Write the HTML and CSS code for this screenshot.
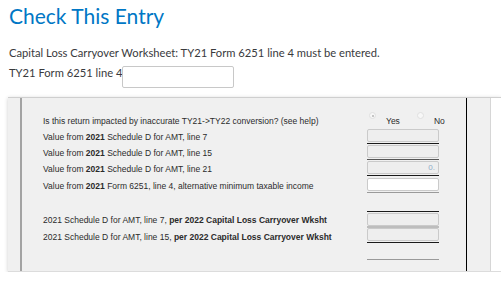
FILE: index.html
```html
<!DOCTYPE html>
<html lang="en">
<head>
    <meta charset="UTF-8">
    <meta name="viewport" content="width=device-width, initial-scale=1.0">
    <title>Check This Entry</title>
    <link rel="stylesheet" href="styles.css">
</head>
<body>
    <h1 class="title">Check This Entry</h1>
    <p class="message">Capital Loss Carryover Worksheet: TY21 Form 6251 line 4 must be entered.</p>

    <div class="entry">
        <label for="line4">TY21 Form 6251 line 4</label>
        <input type="text" id="line4" name="line4">
    </div>

    <div class="panel">
        <div class="gutter"></div>
        <div class="form">
            <div class="row row-radio">
                <div class="label">Is this return impacted by inaccurate TY21-&gt;TY22 conversion? (see help)</div>
                <div class="radios">
                    <span class="radio checked"></span>
                    <span class="radio-text">Yes</span>
                    <span class="radio radio-no"></span>
                    <span class="radio-text">No</span>
                </div>
            </div>

            <div class="row">
                <div class="label">Value from <b>2021</b> Schedule D for AMT, line 7</div>
                <div class="field">
                    <div class="box"></div>
                    <div class="rule"></div>
                </div>
            </div>

            <div class="row">
                <div class="label">Value from <b>2021</b> Schedule D for AMT, line 15</div>
                <div class="field">
                    <div class="box"></div>
                    <div class="rule mid"></div>
                </div>
            </div>

            <div class="row">
                <div class="label">Value from <b>2021</b> Schedule D for AMT, line 21</div>
                <div class="field">
                    <div class="box"><span class="value">0.</span></div>
                    <div class="rule"></div>
                </div>
            </div>

            <div class="row row-shift">
                <div class="label">Value from <b>2021</b> Form 6251, line 4, alternative minimum taxable income</div>
                <div class="field">
                    <div class="box active"></div>
                    <div class="rule gray"></div>
                </div>
            </div>

            <div class="row row-wksht row-gap">
                <div class="label">2021 Schedule D for AMT, line 7, <b>per 2022 Capital Loss Carryover Wksht</b></div>
                <div class="field">
                    <div class="rule top"></div>
                    <div class="box"></div>
                </div>
            </div>

            <div class="row row-wksht row-last">
                <div class="label">2021 Schedule D for AMT, line 15, <b>per 2022 Capital Loss Carryover Wksht</b></div>
                <div class="field">
                    <div class="rule thick"></div>
                    <div class="box"></div>
                    <div class="rule"></div>
                </div>
            </div>

            <div class="total">
                <div class="rule gray"></div>
            </div>
        </div>
        <div class="side"></div>
        <div class="rest"></div>
    </div>
</body>
</html>
```

FILE: styles.css
```css
body {
    margin: 0;
    padding: 0 8px;
    overflow: hidden;
    background-color: #fff;
    font-family: Lato, "Open Sans", sans-serif;
    color: #393a3d;
}
.title {
    margin: 3px 0 0 1px;
    font-size: 21px;
    line-height: 26px;
    font-weight: 400;
    color: #0077c5;
}
.message {
    margin: 17px 0 0 1px;
    font-size: 11.2px;
    line-height: 14px;
}
.entry {
    display: flex;
    align-items: flex-start;
    margin-top: 6px;
    padding-left: 1px;
    font-size: 11.2px;
    line-height: 14px;
}
.entry input {
    width: 112px;
    height: 22px;
    margin: 0;
    padding: 0 4px;
    border: 1px solid #c8c8c8;
    border-radius: 2px;
    box-sizing: border-box;
}

/* worksheet panel */
.panel {
    display: flex;
    margin: 9px -8px 0 0;
    border-top: 1px solid #cfcfcf;
    border-bottom: 1px solid #dcdcdc;
    background-color: #f0f0f0;
    box-shadow: 0 1px 4px rgba(0,0,0,0.2);
    font-family: "Liberation Sans", Arial, sans-serif;
    font-size: 8.5px;
    color: #2b2b2b;
}
.gutter {
    width: 12px;
}
.form {
    width: 447px;
    box-sizing: border-box;
    padding: 15px 0 10px 21px;
    border-left: 2px solid #a3a3a3;
    border-right: 1px solid #000;
}
.side {
    width: 24px;
    box-sizing: border-box;
    border-right: 1px solid #d6d6d6;
}
.rest {
    flex: 1;
    background-color: #fff;
}
.row {
    display: flex;
    align-items: center;
    height: 16px;
}
.label {
    width: 324px;
    line-height: 10px;
    white-space: nowrap;
}
.row-shift {
    margin-top: 1px;
}
.row-gap {
    margin-top: 16px;
}
.row-wksht .label {
    padding-top: 4px;
}
.row-last {
    height: 17px;
}
.field {
    width: 72px;
}
.box {
    height: 13px;
    box-sizing: border-box;
    border: 1px solid #cacaca;
    border-radius: 2px;
    background-color: #eeeeee;
    text-align: right;
}
.box.active {
    background-color: #fff;
}
.value {
    display: block;
    padding-right: 3px;
    font-size: 8px;
    line-height: 11px;
    color: #8eacc8;
}
.rule {
    height: 1px;
    margin: 1px 0;
    background-color: #1a1a1a;
}
.rule.mid {
    background-color: #555;
}
.rule.gray {
    background-color: #9a9a9a;
}
.rule.top {
    margin-top: 0;
}
.rule.thick {
    height: 2px;
    margin: 0;
    background-color: #bdbdbd;
}
.total {
    width: 72px;
    margin: 16px 0 0 324px;
}

/* yes / no */
.radios {
    display: flex;
    align-items: flex-start;
    height: 16px;
    margin-left: 2px;
}
.radio {
    width: 7px;
    height: 7px;
    margin-top: -1px;
    box-sizing: border-box;
    border: 1px solid #e0e0e0;
    border-radius: 50%;
    background-color: #f7f7f7;
    position: relative;
}
.radio.checked::after {
    content: "";
    position: absolute;
    left: 1.5px;
    top: 1.5px;
    width: 2px;
    height: 2px;
    border-radius: 50%;
    background-color: #b5b5b5;
}
.radio-text {
    margin-left: 10px;
    line-height: 16px;
}
.radio-no {
    margin-left: 17px;
}
```
